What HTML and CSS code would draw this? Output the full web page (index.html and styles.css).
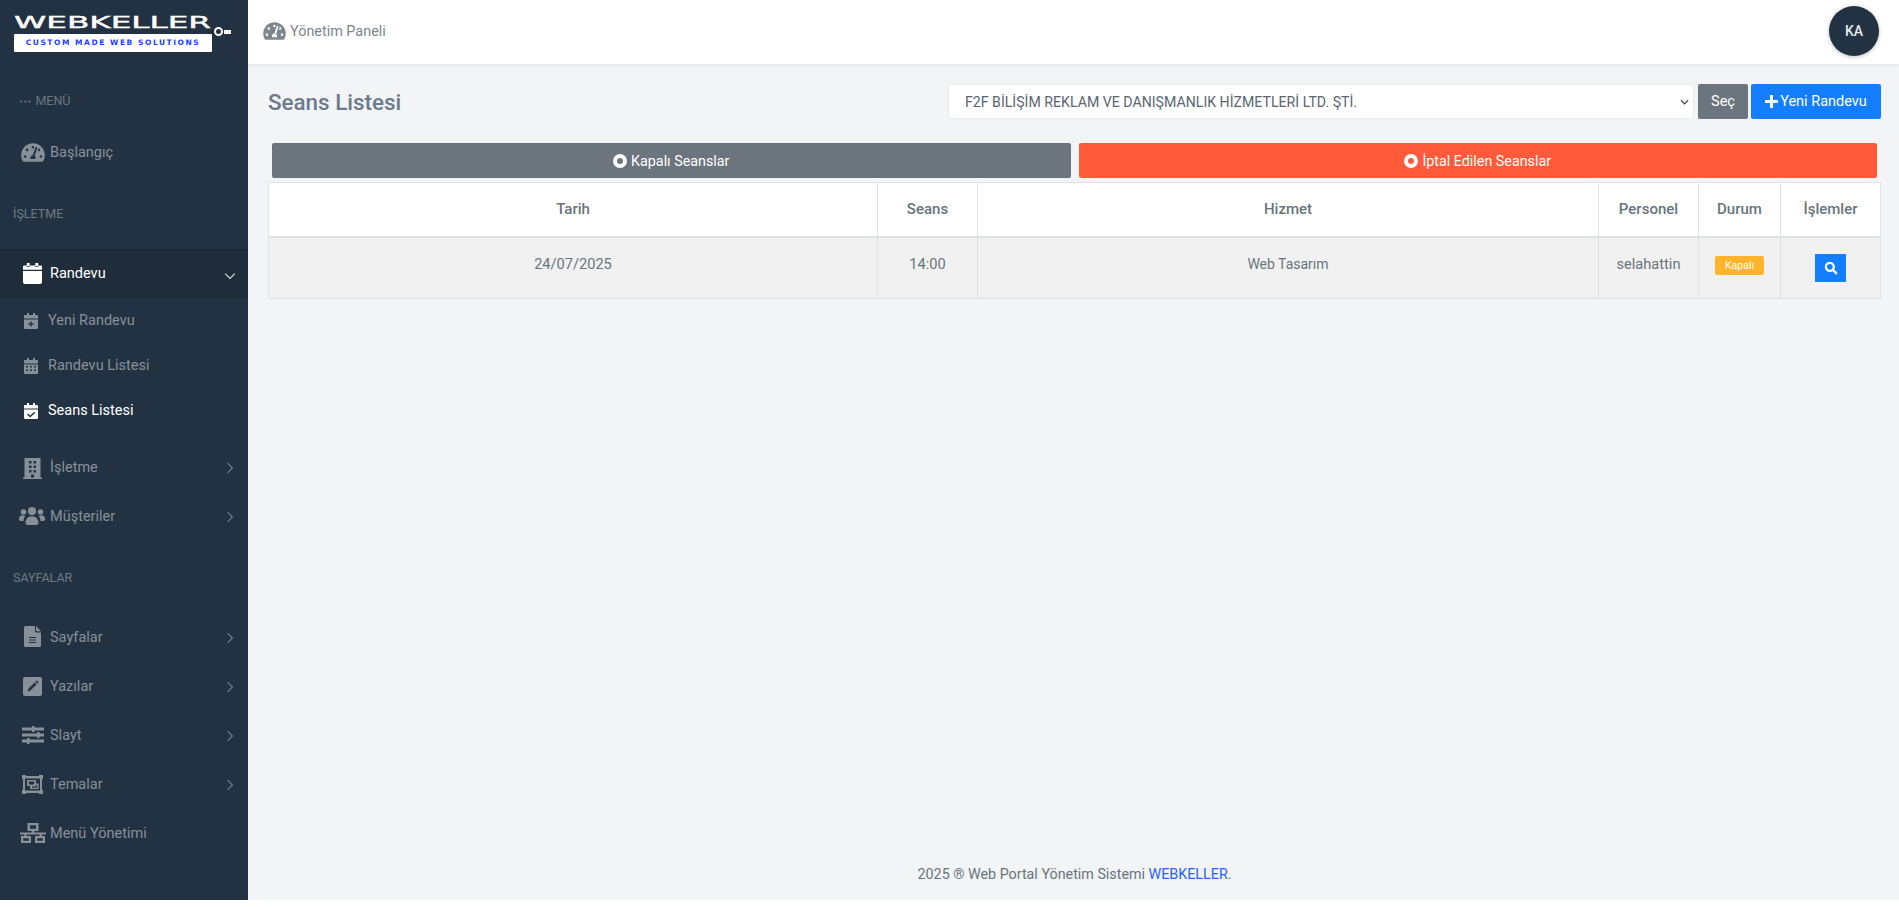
FILE: index.html
```html
<!DOCTYPE html>
<html lang="tr">
<head>
<meta charset="utf-8">
<title>Seans Listesi</title>
<link rel="stylesheet" href="styles.css">
</head>
<body>
<svg class="defs" width="0" height="0" aria-hidden="true">
  <symbol id="i-gauge" viewBox="0 0 576 512"><path d="M288 32C128.94 32 0 160.94 0 320c0 52.8 14.25 102.26 39.06 144.8 5.61 9.62 16.3 15.2 27.44 15.2h443c11.14 0 21.83-5.58 27.44-15.2C561.75 422.26 576 372.8 576 320c0-159.06-128.94-288-288-288zm0 64c14.71 0 26.58 10.13 30.32 23.65-1.11 2.26-2.64 4.23-3.45 6.67l-9.22 27.67c-5.13 3.49-10.97 6.01-17.64 6.01-17.67 0-32-14.33-32-32S270.33 96 288 96zM96 384c-17.67 0-32-14.33-32-32s14.33-32 32-32 32 14.33 32 32-14.33 32-32 32zm48-160c-17.67 0-32-14.33-32-32s14.33-32 32-32 32 14.33 32 32-14.33 32-32 32zm246.77-72.41l-61.33 184C343.13 347.33 352 364.54 352 384c0 11.72-3.38 22.55-8.88 32H232.88c-5.5-9.45-8.88-20.28-8.88-32 0-33.94 26.5-61.43 59.9-63.59l61.34-184.01c4.17-12.56 17.73-19.45 30.36-15.17 12.57 4.19 19.35 17.79 15.17 30.36zm14.66 57.2l15.52-46.55c3.47-1.29 7.13-2.23 11.05-2.23 17.67 0 32 14.33 32 32s-14.33 32-32 32c-11.38-.01-20.89-6.28-26.57-15.22zM480 384c-17.67 0-32-14.33-32-32s14.33-32 32-32 32 14.33 32 32-14.33 32-32 32z"/></symbol>
  <symbol id="i-cal" viewBox="0 0 20 22"><path d="M4 0h3v3H4zM13 0h3v3h-3z"/><path d="M1.500 2.500H4V4h3V2.500h6V4h3V2.500h2.500A1.500 1.500 0 0 1 20 4v3H0V4a1.500 1.500 0 0 1 1.500-1.500zM0 8.300h20V20a2 2 0 0 1-2 2H2a2 2 0 0 1-2-2z"/></symbol>
  <symbol id="i-cal-plus" viewBox="0 0 14 16"><path fill-rule="evenodd" d="M3 0h2v2h4V0h2v2h2a1 1 0 0 1 1 1v2.500H0V3a1 1 0 0 1 1-1h2zM0 6.500h14V15a1 1 0 0 1-1 1H1a1 1 0 0 1-1-1zM6.300 8.500v1.800H4.500v1.400h1.800v1.800h1.400v-1.800h1.800v-1.400H7.700V8.500z"/></symbol>
  <symbol id="i-cal-grid" viewBox="0 0 14 16"><path fill-rule="evenodd" d="M3 0h2v2h4V0h2v2h2a1 1 0 0 1 1 1v2.500H0V3a1 1 0 0 1 1-1h2zM0 6.500h14V15a1 1 0 0 1-1 1H1a1 1 0 0 1-1-1zM2 8v1.500h2V8zM6 8v1.500h2V8zM10 8v1.500h2V8zM2 11.500V13h2v-1.500zM6 11.500V13h2v-1.500zM10 11.500V13h2v-1.500z"/></symbol>
  <symbol id="i-cal-check" viewBox="0 0 14 16"><path fill-rule="evenodd" d="M3 0h2v2h4V0h2v2h2a1 1 0 0 1 1 1v2.500H0V3a1 1 0 0 1 1-1h2zM0 6.500h14V15a1 1 0 0 1-1 1H1a1 1 0 0 1-1-1zM10.300 8.700 6.200 12.500 4 10.500l-1 1 3.200 3 5.100-4.800z"/></symbol>
  <symbol id="i-building" viewBox="0 0 19 21"><path fill-rule="evenodd" d="M1.500 0h16v19.500H19V21H0v-1.500h1.500zM6 3v2.500h2.500V3zM10.500 3v2.500H13V3zM6 7.500V10h2.500V7.500zM10.500 7.500V10H13V7.500zM6 12v2.500h2.500V12zM10.500 12v2.500H13V12zM8 16.500v3h3v-3z"/></symbol>
  <symbol id="i-users" viewBox="0 0 26 18"><circle cx="13" cy="4" r="4"/><circle cx="4.500" cy="5" r="2.800"/><circle cx="21.500" cy="5" r="2.800"/><path d="M6.500 16c0-4 2.500-6.800 6.500-6.800s6.500 2.800 6.500 6.800c0 1.300-1 2-2 2H8.500c-1 0-2-.7-2-2zM0 12c0-2.300 1.500-3.800 3.500-3.800 1.100 0 2.100.4 2.800 1.100C5.100 10.600 4.500 12.300 4.500 14H1.500C.5 14 0 13.200 0 12zM26 12c0-2.300-1.500-3.800-3.500-3.800-1.100 0-2.100.4-2.800 1.100 1.200 1.300 1.800 3 1.800 4.700h3c1 0 1.500-.8 1.500-2z"/></symbol>
  <symbol id="i-file" viewBox="0 0 17 21"><path fill-rule="evenodd" d="M1.500 0H11v5.500a1 1 0 0 0 1 1h5V19.500a1.500 1.500 0 0 1-1.500 1.500h-14A1.500 1.500 0 0 1 0 19.500V1.500A1.500 1.500 0 0 1 1.500 0zM5 11v1h7v-1zM5 13.500v1h7v-1zM5 16v1h7v-1zM12 0 17 5.200H12z"/></symbol>
  <symbol id="i-edit" viewBox="0 0 19 19"><path fill-rule="evenodd" d="M2 0h15a2 2 0 0 1 2 2v15a2 2 0 0 1-2 2H2a2 2 0 0 1-2-2V2a2 2 0 0 1 2-2zM11.500 5.500 5.500 11.500 4.500 14.500 7.500 13.500 13.500 7.500zM12.300 4.700 14.300 6.700 15 6c.4-.4.4-.9 0-1.300L14.300 4c-.4-.4-.9-.4-1.300 0z"/></symbol>
  <symbol id="i-sliders" viewBox="0 0 22 18"><path d="M0 1.500h22v3H0zM0 7.500h22v3H0zM0 13.500h22v3H0z"/><rect x="10" width="2.500" height="6"/><rect x="15" y="6" width="2.500" height="6"/><rect x="5" y="12" width="2.500" height="6"/></symbol>
  <symbol id="i-theme" viewBox="0 0 21 19"><path fill-rule="evenodd" d="M0 0h4v1h13V0h4v4h-1v11h1v4h-4v-1H4v1H0v-4h1V4H0zM3 3.500v12h15v-12zM5 5h9v3.500h2.500V14H8v-3H5zM6.800 6.500v3h5.500v-3zM14 10v1.500H10V12.800h5V10z"/></symbol>
  <symbol id="i-sitemap" viewBox="0 0 26 20"><path fill-rule="evenodd" d="M7.500 0h11v8h-4.300v1.500H26v2H21.800V13H25v7H15v-7h4.500v-1.500H6.500V13H11v7H1v-7h3.300v-1.500H0v-2h11.800V8H7.500zM10 2.200v3.600h6V2.200zM3.200 15.200v2.600h5.600v-2.600zM17.200 15.200v2.600h5.600v-2.600z"/></symbol>
</svg>
<div class="app">
  <aside class="sidebar">
    <div class="logo">
      <div class="logo-word">WEBKELLER</div>
      <div class="logo-tag">CUSTOM MADE WEB SOLUTIONS</div>
      <span class="logo-key"><i class="key-ring"></i><i class="key-bit"></i></span>
    </div>
    <div class="menu-label"><span class="dots">•••</span>MENÜ</div>
    <a class="nav-item nav-first"><svg class="ico ico-gauge"><use href="#i-gauge"/></svg><span>Başlangıç</span></a>
    <div class="section-label section-isletme">İŞLETME</div>
    <a class="nav-item nav-open"><svg class="ico ico-cal"><use href="#i-cal"/></svg><span>Randevu</span><svg class="chev" viewBox="0 0 10 10"><path d="M1 3l4 4 4-4"/></svg></a>
    <div class="sub">
      <a class="sub-item"><svg class="sub-ico"><use href="#i-cal-plus"/></svg><span>Yeni Randevu</span></a>
      <a class="sub-item"><svg class="sub-ico"><use href="#i-cal-grid"/></svg><span>Randevu Listesi</span></a>
      <a class="sub-item sub-active"><svg class="sub-ico"><use href="#i-cal-check"/></svg><span>Seans Listesi</span></a>
    </div>
    <a class="nav-item"><svg class="ico ico-building"><use href="#i-building"/></svg><span>İşletme</span><svg class="chev" viewBox="0 0 10 10"><path d="M3 1l4 4-4 4"/></svg></a>
    <a class="nav-item"><svg class="ico ico-users"><use href="#i-users"/></svg><span>Müşteriler</span><svg class="chev" viewBox="0 0 10 10"><path d="M3 1l4 4-4 4"/></svg></a>
    <div class="section-label section-sayfalar">SAYFALAR</div>
    <a class="nav-item"><svg class="ico ico-file"><use href="#i-file"/></svg><span>Sayfalar</span><svg class="chev" viewBox="0 0 10 10"><path d="M3 1l4 4-4 4"/></svg></a>
    <a class="nav-item"><svg class="ico ico-edit"><use href="#i-edit"/></svg><span>Yazılar</span><svg class="chev" viewBox="0 0 10 10"><path d="M3 1l4 4-4 4"/></svg></a>
    <a class="nav-item"><svg class="ico ico-sliders"><use href="#i-sliders"/></svg><span>Slayt</span><svg class="chev" viewBox="0 0 10 10"><path d="M3 1l4 4-4 4"/></svg></a>
    <a class="nav-item"><svg class="ico ico-theme"><use href="#i-theme"/></svg><span>Temalar</span><svg class="chev" viewBox="0 0 10 10"><path d="M3 1l4 4-4 4"/></svg></a>
    <a class="nav-item"><svg class="ico ico-sitemap"><use href="#i-sitemap"/></svg><span>Menü Yönetimi</span></a>
  </aside>
  <div class="main">
    <header class="topbar">
      <div class="crumb"><svg class="crumb-ico"><use href="#i-gauge"/></svg><span>Yönetim Paneli</span></div>
      <div class="avatar">KA</div>
    </header>
    <main class="content">
      <div class="page-head">
        <h1 class="page-title">Seans Listesi</h1>
        <form class="picker">
          <div class="select-box"><span>F2F BİLİŞİM REKLAM VE DANIŞMANLIK HİZMETLERİ LTD. ŞTİ.</span><svg class="select-arrow" viewBox="0 0 10 6"><path d="M1 1l4 4 4-4"/></svg></div>
          <a class="btn btn-gray btn-sec">Seç</a>
          <a class="btn btn-blue btn-new"><svg class="plus" viewBox="0 0 12 12"><path d="M6 0v12M0 6h12"/></svg>Yeni Randevu</a>
        </form>
      </div>
      <div class="filters">
        <a class="filter filter-gray"><span class="dot"></span>Kapalı Seanslar</a>
        <a class="filter filter-red"><span class="dot"></span>İptal Edilen Seanslar</a>
      </div>
      <table class="grid">
        <colgroup>
          <col class="c-tarih"><col class="c-seans"><col class="c-hizmet"><col class="c-personel"><col class="c-durum"><col class="c-islem">
        </colgroup>
        <thead>
          <tr><th>Tarih</th><th>Seans</th><th>Hizmet</th><th>Personel</th><th>Durum</th><th>İşlemler</th></tr>
        </thead>
        <tbody>
          <tr>
            <td>24/07/2025</td><td>14:00</td><td class="td-hizmet">Web Tasarım</td><td>selahattin</td>
            <td class="td-top td-badge"><span class="badge">Kapalı</span></td>
            <td class="td-top td-action"><a class="search-btn"><svg viewBox="0 0 12 12"><circle cx="5" cy="5" r="3.400"/><path d="M7.500 7.500L11 11"/></svg></a></td>
          </tr>
        </tbody>
      </table>
      <footer class="footer">2025 ® Web Portal Yönetim Sistemi <a class="footer-link">WEBKELLER.</a></footer>
    </main>
  </div>
</div>
</body>
</html>
```
FILE: styles.css
```css
* { box-sizing: border-box; }
html, body { margin: 0; height: 907px; overflow: hidden; background: #fff; }
body { font-family: Roboto, "Noto Sans", sans-serif; font-size: 14px; color: #67757c; }
.defs { position: absolute; }
.app { display: flex; height: 900px; }

.sidebar { width: 248px; flex: none; background: #233242; color: #87909a; display: flex; flex-direction: column; }
.logo { position: relative; height: 64px; padding: 15px 0 0 14px; }
.logo-word { width: 198px; height: 15px; line-height: 15px; font-family: "DejaVu Sans", sans-serif; font-weight: 400; font-size: 16px; color: #fff; -webkit-text-stroke: .4px #fff; white-space: nowrap; transform: scaleX(2.040); transform-origin: left center; }
.logo-tag { width: 198px; height: 18px; margin-top: 4px; background: #fff; color: #1c3fff; font-family: "DejaVu Sans", sans-serif; font-weight: 700; font-size: 7.500px; letter-spacing: 1.550px; line-height: 18px; text-align: center; white-space: nowrap; border-radius: 1px; }
.logo-key { position: absolute; left: 214px; top: 27px; display: flex; align-items: center; }
.key-ring { width: 9px; height: 9px; border: 2px solid #fff; border-radius: 50%; background: #233242; }
.key-bit { width: 7px; height: 4px; margin-left: 1px; background: #fff; }

.menu-label { height: 20px; margin-top: 27px; padding-left: 19px; font-size: 12.500px; line-height: 20px; color: #6a7683; }
.dots { font-size: 7px; letter-spacing: 0; margin-right: 4px; vertical-align: 1px; font-family: "DejaVu Sans", sans-serif; }
.section-label { height: 20px; padding-left: 13px; font-size: 12.500px; line-height: 20px; color: #6f7a86; }
.section-isletme { margin-top: 27px; margin-bottom: 25px; }
.section-sayfalar { margin-top: 27px; margin-bottom: 25px; }

.nav-item { position: relative; display: flex; align-items: center; height: 49px; flex: none; padding-left: 50px; font-size: 14.500px; color: #87909a; }
.nav-first { margin-top: 17px; }
.nav-open { background: #1f2c3a; color: #fff; }
.ico { position: absolute; fill: currentColor; }
.ico-gauge { left: 21px; top: 14px; width: 24px; height: 21px; }
.ico-cal { left: 23px; top: 14px; width: 19px; height: 21px; }
.ico-building { left: 23px; top: 15px; width: 19px; height: 21px; }
.ico-users { left: 19px; top: 15px; width: 26px; height: 18px; }
.ico-file { left: 24px; top: 13px; width: 17px; height: 21px; }
.ico-edit { left: 23px; top: 15px; width: 19px; height: 19px; }
.ico-sliders { left: 22px; top: 15px; width: 22px; height: 18px; }
.ico-theme { left: 22px; top: 15px; width: 21px; height: 19px; }
.ico-sitemap { left: 20px; top: 14px; width: 26px; height: 20px; }
.chev { position: absolute; left: 224px; top: 19px; width: 12px; height: 12px; fill: none; stroke: currentColor; stroke-width: .9; opacity: .85; }
.nav-open .chev { top: 21px; }

.sub { display: flex; flex-direction: column; padding-bottom: 10px; }
.sub-item { display: flex; align-items: center; height: 45px; padding-left: 24px; font-size: 14.500px; color: #87909a; }
.sub-ico { width: 14px; height: 16px; margin-right: 10px; fill: currentColor; }
.sub-active { color: #fff; }

.main { flex: 1; min-width: 0; display: flex; flex-direction: column; background: #f2f4f6; }
.topbar { display: flex; align-items: center; justify-content: space-between; height: 64px; flex: none; padding: 0 20px 0 15px; background: #fff; box-shadow: 0 1px 4px rgba(0,0,0,.08); }
.crumb { display: flex; align-items: center; color: #7b868f; font-size: 14.400px; margin-top: -2px; }
.crumb-ico { width: 23px; height: 20px; margin-right: 4px; fill: #7b868f; }
.avatar { width: 50px; height: 50px; margin-top: -2px; border-radius: 50%; background: #233242; color: #e6e9ec; font-size: 14px; font-weight: 500; display: flex; align-items: center; justify-content: center; box-shadow: 0 1px 4px rgba(0,0,0,.25); }

.content { flex: 1; display: flex; flex-direction: column; padding: 20px 18px 0 20px; }
.page-head { display: flex; align-items: flex-start; justify-content: space-between; height: 35px; }
.page-title { margin: 0; font-size: 22.400px; line-height: 36px; font-weight: 500; color: #6b7a8c; }
.picker { display: flex; margin: 0; }
.select-box { display: flex; align-items: center; justify-content: space-between; width: 746px; height: 35px; padding: 0 4px 0 16px; background: #fff; border: 1px solid #e9ecef; border-radius: 2px; font-size: 14.150px; color: #5b6672; }
.select-arrow { width: 9px; height: 6px; fill: none; stroke: #4a5560; stroke-width: 1.500; }
.btn { display: flex; align-items: center; justify-content: center; height: 35px; border-radius: 2px; color: #fff; font-size: 14.500px; }
.btn-gray { background: #6c757d; }
.btn-blue { background: #137eff; }
.btn-sec { width: 50px; margin-left: 4px; }
.btn-new { width: 130px; margin-left: 3px; }
.plus { width: 13px; height: 13px; margin-right: 2px; fill: none; stroke: #fff; stroke-width: 2.800; }

.filters { display: flex; gap: 8px; margin-top: 24px; padding: 0 4px; }
.filter { flex: 1; display: flex; align-items: center; justify-content: center; height: 35px; border-radius: 2px; color: #fff; font-size: 14.300px; }
.filter-gray { background: #6c757d; }
.filter-red { background: #ff5a39; }
.dot { width: 14px; height: 14px; margin-right: 4px; border-radius: 50%; border: 4.500px solid #fff; }
.filter-gray .dot { background: #6c757d; }
.filter-red .dot { background: #ff5a39; }

.grid { width: 1612px; margin-top: 4px; border-collapse: collapse; table-layout: fixed; font-size: 14.600px; }
.c-tarih { width: 609px; } .c-seans { width: 100px; } .c-hizmet { width: 621px; }
.c-personel { width: 100px; } .c-durum { width: 82px; } .c-islem { width: 100px; }
.grid th, .grid td { border: 1px solid #dee2e6; text-align: center; }
.grid th { height: 54px; background: #fff; border-bottom-width: 2px; font-size: 15px; font-weight: 500; color: #67757c; }
.grid td { height: 62px; padding: 0 0 8px; background: #f1f1f2; color: #67757c; }
.grid .td-hizmet { font-size: 14px; }
.grid .td-top { vertical-align: top; line-height: 0; }
.grid .td-badge { padding-top: 18px; }
.grid .td-action { padding-top: 16px; }
.badge { display: inline-block; padding: 0 10px; height: 19px; line-height: 19px; border-radius: 2px; background: #ffb42b; color: #fff; font-size: 10.500px; }
.search-btn { display: inline-flex; align-items: center; justify-content: center; width: 31px; height: 28px; background: #137eff; }
.search-btn svg { width: 14px; height: 14px; fill: none; stroke: #fff; stroke-width: 2; }

.footer { margin-top: auto; height: 35px; text-align: center; font-size: 14.300px; line-height: 18px; color: #67757c; }
.footer-link { color: #2962ff; }
```
